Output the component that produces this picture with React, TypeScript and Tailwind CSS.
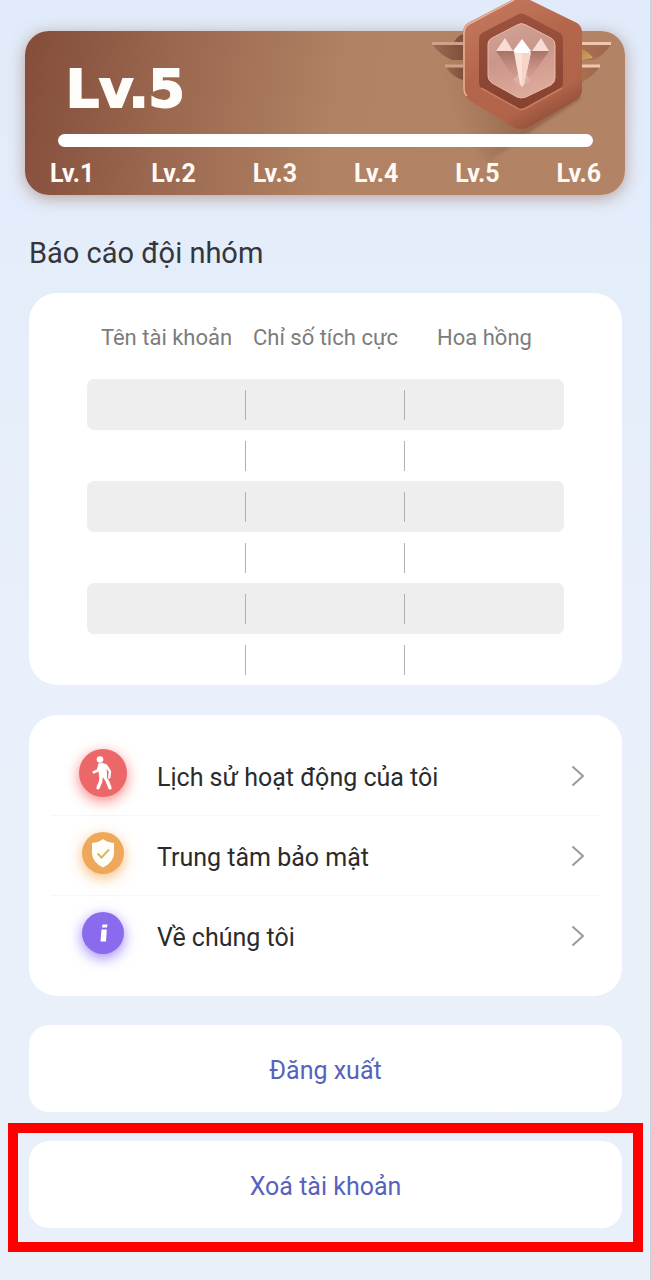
import React from "react";

const levels = ["Lv.1", "Lv.2", "Lv.3", "Lv.4", "Lv.5", "Lv.6"];
const columns = ["Tên tài khoản", "Chỉ số tích cực", "Hoa hồng"];
const rows = [0, 1, 2, 3, 4, 5];

function Medal() {
  return (
    <svg
      className="absolute right-[5px] top-[-31px] h-[175px] w-[195px]"
      viewBox="425 0 195 175"
      aria-hidden="true"
    >
      <defs>
        <linearGradient id="face" x1="0.2" y1="0" x2="0.7" y2="1">
          <stop offset="0" stopColor="#c47a60" />
          <stop offset="0.45" stopColor="#b4664a" />
          <stop offset="0.8" stopColor="#b0644a" />
          <stop offset="1" stopColor="#8b4a36" />
        </linearGradient>
        <linearGradient id="well" x1="0" y1="0" x2="0" y2="1">
          <stop offset="0" stopColor="#9c523d" />
          <stop offset="1" stopColor="#86422f" />
        </linearGradient>
        <linearGradient id="plate" x1="0" y1="0" x2="0.3" y2="1">
          <stop offset="0" stopColor="#d2a496" />
          <stop offset="0.5" stopColor="#c9968a" />
          <stop offset="1" stopColor="#dba899" />
        </linearGradient>
        <linearGradient id="wing" x1="0" y1="0" x2="1" y2="0">
          <stop offset="0" stopColor="#9c6a50" />
          <stop offset="1" stopColor="#80503c" />
        </linearGradient>
        <linearGradient id="wingR" x1="0" y1="0" x2="1" y2="0">
          <stop offset="0" stopColor="#a8704e" />
          <stop offset="1" stopColor="#a0664e" />
        </linearGradient>
        <linearGradient id="cast" gradientUnits="userSpaceOnUse" x1="520" y1="110" x2="455" y2="125">
          <stop offset="0" stopColor="#7d4c38" stopOpacity="0.5" />
          <stop offset="1" stopColor="#8b5c42" stopOpacity="0" />
        </linearGradient>
        <linearGradient id="gold" x1="0" y1="0" x2="1" y2="1">
          <stop offset="0" stopColor="#b98745" />
          <stop offset="1" stopColor="#d6a468" />
        </linearGradient>
        <linearGradient id="gemShade" x1="0" y1="0" x2="0" y2="1">
          <stop offset="0" stopColor="#9c6558" stopOpacity="0.75" />
          <stop offset="1" stopColor="#c9958a" stopOpacity="0" />
        </linearGradient>
        <filter id="soft" x="-20%" y="-20%" width="140%" height="140%">
          <feGaussianBlur stdDeviation="1.5" />
        </filter>
      </defs>
      <path d="M445 60 L470 60 L582 98 L532 131 L488 163 Q455 130 445 60Z" fill="url(#cast)" filter="url(#soft)" />
      <path d="M454 42 Q458 35 463 34 V60 H452 Q440 55 432 44 H463Z" fill="url(#wing)" />
      <path d="M445 66 H463 V80 Q452 77 445 66Z" fill="url(#wing)" />
      <path d="M582 44 H611 Q605 55 593 60 H582Z" fill="url(#wingR)" />
      <path d="M582 66 H600 Q594 76 582 82Z" fill="url(#wingR)" />
      <path d="M582 49 Q590 53 593 58 L582 60Z" fill="url(#gold)" />
      <path d="M432 43.500 H463 M445 66 H463" stroke="#cda18c" strokeWidth="3" />
      <path d="M582 43.500 H611 M582 66 H600" stroke="#f0c6ae" strokeWidth="3" />
      <path
        d="M514 -1 Q521 -5 528 -1 L577 23 Q582 26 582 33 V90 Q582 96 576 100 L529 127 Q521 131 513 127 L469 100 Q463 96 463 89 V33 Q463 26 468 23Z"
        fill="url(#face)"
      />
      <path d="M514 0 L469 24 Q464 27 464 33 V88 Q464 94 467 96" fill="none" stroke="#eab49c" strokeWidth="1.500" />
      <path d="M517 15 Q521 12 526 15 L560 33 Q563 35 563 40 V82 Q563 87 560 89 L526 108 Q521 111 517 108 L482 89 Q479 87 479 82 V40 Q479 35 482 33Z" fill="url(#well)" />
      <path d="M481 88 L517 108 Q521 111 526 108 L562 88" fill="none" stroke="#c97c60" strokeWidth="1.500" />
      <path d="M517 25 Q521 22 526 25 L551 38 Q555 40 555 45 V78 Q555 82 551 85 L526 97 Q521 99 517 97 L492 83 Q488 80 488 76 V44 Q488 40 492 38Z" fill="url(#plate)" stroke="#eab8a8" strokeWidth="1" />
      <path d="M496 51 H549 L526 84 H518Z" fill="url(#gemShade)" />
      <path d="M513 80 L522 70 L531 80 L522 87Z" fill="#dcb0a2" />
      <path d="M496 51 L505 38 L513 51Z M532 51 L541 38 L549 51Z" fill="#f8dcd4" />
      <path d="M514 52 H531 L524 84 L522 87 L520 84Z" fill="#fae2d7" />
      <path d="M522 52 L531 52 L524 84 L522 87Z" fill="#f6d5c8" />
      <path d="M513 51 L522 39 L531 51 L528 53 H516Z" fill="#ffffff" />
    </svg>
  );
}

function LevelCard() {
  return (
    <section className="relative ml-[25px] mr-[25px] h-[164px] rounded-[24px] bg-linear-[100deg,#834d3a_0%,#9b6850_25%,#b18263_52%,#b28465_100%] pt-[28px] shadow-[0_3px_16px_rgba(150,100,80,0.55)]">
      <Medal />
      <h1 className="relative pl-[41px] font-['DejaVu_Sans',sans-serif] text-[52px] font-bold leading-[60px] text-[#fffdfa] [-webkit-text-stroke:2px_#fffdfa]">
        Lv.5
      </h1>
      <div
        role="progressbar"
        aria-label="Lv.5"
        className="relative ml-[33px] mr-[32px] mt-[15px] h-[13px] rounded-full bg-white"
      />
      <ol className="relative ml-[25px] mr-[24px] mt-[11px] flex justify-between text-[25px] font-bold leading-[32px] text-[#fffaf6]">
        {levels.map((l) => (
          <li key={l}>{l}</li>
        ))}
      </ol>
    </section>
  );
}

function ReportTable() {
  return (
    <section className="ml-[29px] mr-[28px] rounded-[28px] bg-white px-[58px]">
      <table className="w-full table-fixed border-separate border-spacing-0">
        <thead>
          <tr>
            {columns.map((c) => (
              <th key={c} scope="col" className="h-[86px] whitespace-nowrap p-0 pt-[4px] text-center text-[22px] font-normal leading-[30px] text-[#7c7c7c]">
                {c}
              </th>
            ))}
          </tr>
        </thead>
        <tbody>
          {rows.map((r) => (
            <tr key={r} className="group">
              {columns.map((c) => (
                <td
                  key={c}
                  className="h-[51px] p-0 first:rounded-l-[7px] last:rounded-r-[7px] group-odd:bg-[#eeeeee] [&:last-child>div]:border-r-0"
                >
                  <div className="h-[30px] border-r border-[#b0b0b0]" />
                </td>
              ))}
            </tr>
          ))}
        </tbody>
      </table>
    </section>
  );
}

function WalkIcon() {
  return (
    <svg viewBox="0 0 48 48" className="size-[48px]" aria-hidden="true">
      <circle cx="21" cy="10.500" r="3.300" fill="#fff" />
      <path d="M19.500 15 Q23 13.800 27 15.500 L27.500 28 L20.500 28Z" fill="#fff" stroke="#fff" strokeWidth="1" strokeLinejoin="round" />
      <g fill="none" stroke="#fff" strokeLinecap="round" strokeLinejoin="round">
        <path d="M20.500 16.500 L18.800 21.500 L14.800 23.200" strokeWidth="2.600" />
        <path d="M27 16.500 L31 22.500 L30.200 28.500" strokeWidth="2.400" />
        <path d="M22.200 27.500 L21.500 33 L19 38.800" strokeWidth="3.400" />
        <path d="M25.500 27.500 L28.500 32.500 L31 38.800" strokeWidth="3.400" />
      </g>
    </svg>
  );
}

function ShieldIcon() {
  return (
    <svg viewBox="0 0 42 42" className="size-[42px]" aria-hidden="true">
      <path d="M21 7 Q25 10.500 32 11 V21 Q32 30 21 35.500 Q10 30 10 21 V11 Q17 10.500 21 7Z" fill="#fffdf8" />
      <path d="M15.500 21.500 L19.500 25.500 L27 17.500" fill="none" stroke="#dcb565" strokeWidth="2" />
    </svg>
  );
}

function InfoIcon() {
  return (
    <svg viewBox="0 0 42 42" className="size-[42px]" aria-hidden="true">
      <path d="M20.500 12.500 H25.500 L25 15.500 H20Z M19.500 17.500 H24.800 L24 29.500 H18.500Z" fill="#fff" />
    </svg>
  );
}

const menu = [
  {
    label: "Lịch sử hoạt động của tôi",
    icon: <WalkIcon />,
    badge: "size-[48px] bg-[#ec6767] shadow-[0_4px_14px_rgba(250,90,90,0.75)]",
  },
  {
    label: "Trung tâm bảo mật",
    icon: <ShieldIcon />,
    badge: "size-[42px] bg-[#eda85c] shadow-[0_4px_14px_rgba(245,165,80,0.75)]",
  },
  {
    label: "Về chúng tôi",
    icon: <InfoIcon />,
    badge: "size-[42px] bg-[#8a6bed] shadow-[0_4px_14px_rgba(130,95,250,0.75)]",
  },
];

function Menu() {
  return (
    <nav className="ml-[29px] mr-[28px] mt-[30px] rounded-[28px] bg-white px-[22px] pb-[20px] pt-[21px]">
      {menu.map((m) => (
        <a key={m.label} href="#" className="flex h-[80px] items-center border-b border-[#f7f7f7] last:border-b-0">
          <span className="mb-[6px] ml-[24px] flex w-[56px] justify-center">
            <span className={"flex items-center justify-center rounded-full " + m.badge}>{m.icon}</span>
          </span>
          <span className="ml-[26px] flex-1 pt-[4px] text-[25px] leading-[34px] text-[#2b2b2b]">{m.label}</span>
          <svg viewBox="0 0 14 22" className="mr-[15px] h-[22px] w-[14px]" aria-hidden="true">
            <path d="M1.500 1.500 L12 11 L1.500 20.500" fill="none" stroke="#999999" strokeWidth="2" />
          </svg>
        </a>
      ))}
    </nav>
  );
}

const actionClass =
  "block h-[87px] w-full rounded-[20px] bg-white pt-[4px] text-center text-[25px] leading-[34px] text-[#5763bb]";

export default function App() {
  return (
    <main className="min-h-screen overflow-hidden border-r border-[#c5d2dc] bg-linear-to-b from-[#e1ebfa] via-[#e9f0fb] to-[#e9f0fa] pb-[28px] pt-[31px] font-[Roboto,sans-serif]">
      <LevelCard />
      <h2 className="mb-[20px] ml-[29px] mt-[38px] text-[29px] leading-[40px] text-[#34363c]">Báo cáo đội nhóm</h2>
      <ReportTable />
      <Menu />
      <div className="ml-[29px] mr-[28px] mt-[29px]">
        <button type="button" className={actionClass}>
          Đăng xuất
        </button>
      </div>
      <div className="ml-[8px] mr-[7px] mt-[11px] border-[10px] border-[#ff0000] px-[11px] pb-[14px] pt-[8px]">
        <button type="button" className={actionClass}>
          Xoá tài khoản
        </button>
      </div>
    </main>
  );
}
